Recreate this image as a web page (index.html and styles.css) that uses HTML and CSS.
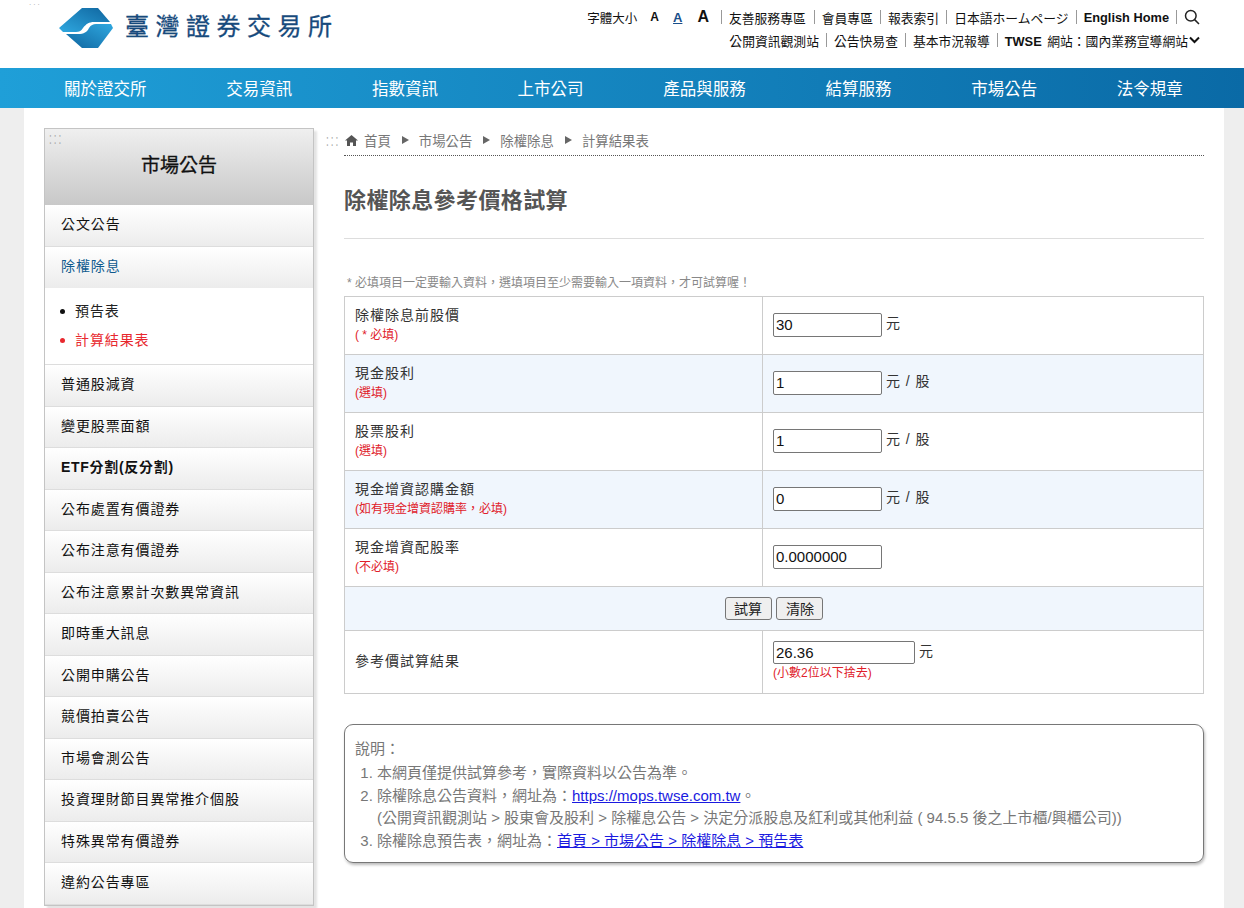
FILE: index.html
```html
<!DOCTYPE html>
<html lang="zh-Hant">
<head>
    <meta charset="UTF-8">
    <title>除權除息參考價格試算</title>
    <link rel="stylesheet" href="styles.css">
</head>
<body>
    <a class="acc acc-top" href="#">...</a>
    <header class="top">
        <a class="logo" href="#">
            <svg width="56" height="42" viewBox="0 0 56 42">
                <defs>
                    <linearGradient id="lg1" x1="0" y1="1" x2="1" y2="0">
                        <stop offset="0" stop-color="#2fa8e0"/>
                        <stop offset="1" stop-color="#0f659f"/>
                    </linearGradient>
                    <linearGradient id="lg2" x1="0" y1="1" x2="1" y2="0">
                        <stop offset="0" stop-color="#0f659f"/>
                        <stop offset="1" stop-color="#2fa8e0"/>
                    </linearGradient>
                </defs>
                <path d="M1 21L24 1H40L52 15H36C31 15 28 17 25 21C23 24 21 25 18 25H5Z" fill="url(#lg1)"/>
                <path d="M55 21L40 41H24L8 27H20C26 27 29 25 31 21C33 18 35 17 38 17H53Z" fill="url(#lg2)"/>
            </svg>
            <span class="logo-name">臺灣證券交易所</span>
        </a>
        <div class="tools">
            <div class="tool-row">
                <span class="font-label">字體大小</span>
                <a class="fs fs-s" href="#">A</a>
                <a class="fs fs-m" href="#">A</a>
                <a class="fs fs-l" href="#">A</a>
                <a class="tl first" href="#">友善服務專區</a>
                <a class="tl" href="#">會員專區</a>
                <a class="tl" href="#">報表索引</a>
                <a class="tl" href="#">日本語ホームページ</a>
                <a class="tl strong" href="#">English Home</a>
                <a class="tl search" href="#">
                    <svg width="16" height="16" viewBox="0 0 16 16" fill="none" stroke="#222" stroke-width="1.5">
                        <circle cx="6.8" cy="6.8" r="5.3"/>
                        <path d="M10.6 10.6L15 15"/>
                    </svg>
                </a>
            </div>
            <div class="tool-row">
                <a class="tl" href="#">公開資訊觀測站</a>
                <a class="tl" href="#">公告快易查</a>
                <a class="tl" href="#">基本市況報導</a>
                <span class="tl">
                    <span><b>TWSE</b> 網站：國內業務宣導網站</span>
                    <svg class="caret" width="11" height="8" viewBox="0 0 11 8" fill="none" stroke="#111" stroke-width="2"><path d="M1 1.5L5.5 6L10 1.5"/></svg>
                </span>
            </div>
        </div>
    </header>

    <nav class="nav">
        <a href="#">關於證交所</a>
        <a href="#">交易資訊</a>
        <a href="#">指數資訊</a>
        <a href="#">上市公司</a>
        <a href="#">產品與服務</a>
        <a href="#">結算服務</a>
        <a href="#">市場公告</a>
        <a href="#">法令規章</a>
    </nav>

    <div class="wrap">
        <aside class="side">
            <a class="acc acc-side" href="#">:::</a>
            <h2>市場公告</h2>
            <a class="side-item" href="#">公文公告</a>
            <a class="side-item on" href="#">除權除息</a>
            <ul class="sub">
                <li><a href="#">預告表</a></li>
                <li class="cur"><a href="#">計算結果表</a></li>
            </ul>
            <a class="side-item" href="#">普通股減資</a>
            <a class="side-item" href="#">變更股票面額</a>
            <a class="side-item strong" href="#">ETF分割(反分割)</a>
            <a class="side-item" href="#">公布處置有價證券</a>
            <a class="side-item" href="#">公布注意有價證券</a>
            <a class="side-item" href="#">公布注意累計次數異常資訊</a>
            <a class="side-item" href="#">即時重大訊息</a>
            <a class="side-item" href="#">公開申購公告</a>
            <a class="side-item" href="#">競價拍賣公告</a>
            <a class="side-item" href="#">市場會測公告</a>
            <a class="side-item" href="#">投資理財節目異常推介個股</a>
            <a class="side-item" href="#">特殊異常有價證券</a>
            <a class="side-item" href="#">違約公告專區</a>
        </aside>

        <main class="main">
            <a class="acc acc-main" href="#">:::</a>
            <div class="crumb">
                <svg width="13" height="11" viewBox="0 0 13 11" fill="#555"><path d="M6.5 0L13 5.6H11V11H8V7.4H5V11H2V5.6H0Z"/></svg>
                <a href="#">首頁</a>
                <i></i>
                <a href="#">市場公告</a>
                <i></i>
                <a href="#">除權除息</a>
                <i></i>
                <a href="#">計算結果表</a>
            </div>
            <h1>除權除息參考價格試算</h1>
            <p class="note">* 必填項目一定要輸入資料，選填項目至少需要輸入一項資料，才可試算喔！</p>

            <table class="calc">
                <tr>
                    <th>除權除息前股價<small>( * 必填)</small></th>
                    <td><input class="num" value="30"> 元</td>
                </tr>
                <tr class="alt">
                    <th>現金股利<small>(選填)</small></th>
                    <td><input class="num" value="1"> 元 / 股</td>
                </tr>
                <tr>
                    <th>股票股利<small>(選填)</small></th>
                    <td><input class="num" value="1"> 元 / 股</td>
                </tr>
                <tr class="alt">
                    <th>現金增資認購金額<small>(如有現金增資認購率，必填)</small></th>
                    <td><input class="num" value="0"> 元 / 股</td>
                </tr>
                <tr>
                    <th>現金增資配股率<small>(不必填)</small></th>
                    <td><input class="num" value="0.0000000"></td>
                </tr>
                <tr class="alt btn-row">
                    <td colspan="2"><button>試算</button> <button>清除</button></td>
                </tr>
                <tr class="res-row">
                    <th>參考價試算結果</th>
                    <td><input class="num res" value="26.36"> 元<small>(小數2位以下捨去)</small></td>
                </tr>
            </table>

            <div class="info">
                <p>說明：</p>
                <ol>
                    <li>本網頁僅提供試算參考，實際資料以公告為準。</li>
                    <li>除權除息公告資料，網址為：<a href="#">https://mops.twse.com.tw</a>。<br>(公開資訊觀測站 &gt; 股東會及股利 &gt; 除權息公告 &gt; 決定分派股息及紅利或其他利益 ( 94.5.5 後之上市櫃/興櫃公司))</li>
                    <li>除權除息預告表，網址為：<a href="#">首頁 &gt; 市場公告 &gt; 除權除息 &gt; 預告表</a></li>
                </ol>
            </div>
        </main>
    </div>
</body>
</html>
```

FILE: styles.css
```css
* {
    margin: 0;
    padding: 0;
    box-sizing: border-box;
}
html, body {
    height: 908px;
    overflow: hidden;
}
body {
    position: relative;
    background-color: #eee;
    font-family: "Liberation Sans", "Noto Sans CJK TC", sans-serif;
    font-size: 14px;
    color: #222;
}
a {
    color: inherit;
    text-decoration: none;
}
li {
    list-style: none;
}
/* 無障礙定位點 */
.acc {
    position: absolute;
    font-size: 10px;
    line-height: 10px;
    letter-spacing: 2px;
    color: #aaa;
}
.acc-top {
    left: 29px;
    top: 0;
    font-size: 8px;
    line-height: 6px;
    letter-spacing: 2px;
}
.acc-side {
    left: 4px;
    top: 5px;
    transform: scaleY(1.6);
}
.acc-main {
    left: -18px;
    top: 8px;
    transform: scaleY(1.6);
}
/* 頁首 */
.top {
    height: 68px;
    background-color: #fff;
    display: flex;
    justify-content: space-between;
    padding: 0 44px 0 58px;
}
.logo {
    display: flex;
    align-items: flex-start;
    gap: 11px;
    padding-top: 7px;
}
.logo-name {
    font-size: 24px;
    line-height: 40px;
    letter-spacing: 6.5px;
    color: #174a7c;
    -webkit-text-stroke: 0.3px #174a7c;
}
.tools {
    display: flex;
    flex-direction: column;
    align-items: flex-end;
    padding-top: 8px;
    gap: 5px;
}
.tool-row {
    display: flex;
    align-items: center;
    height: 18px;
    font-size: 12.8px;
    color: #111;
}
.tool-row b {
    margin-right: 2px;
}
.font-label {
    font-size: 12.5px;
    margin-right: 13px;
}
.fs {
    font-weight: bold;
    margin-right: 14px;
}
.fs-s {
    font-size: 12px;
}
.fs-m {
    font-size: 13px;
    margin-right: 15px;
    color: #1b4f8a;
    text-decoration: underline;
}
.fs-l {
    font-size: 16px;
    margin-right: 13px;
}
.tl {
    display: flex;
    align-items: center;
    gap: 1px;
    height: 14px;
    padding: 0 7px;
    border-right: 1px solid #999;
    white-space: nowrap;
}
.tl.first {
    border-left: 1px solid #999;
    padding-right: 8px;
    margin-left: -1px;
}
.tool-row .tl:last-child {
    border-right: 0;
    padding-right: 0;
}
.strong {
    font-weight: bold;
}
/* 主選單 */
.nav {
    height: 40px;
    display: flex;
    gap: 79.7px;
    padding-left: 64px;
    align-items: center;
    background: linear-gradient(90deg, #1f9fd8, #0a6aa6);
    color: #fff;
    font-size: 16.5px;
    white-space: nowrap;
}
/* 內容區 */
.wrap {
    width: 1200px;
    height: 800px;
    margin-left: 24px;
    background-color: #fff;
    display: flex;
    align-items: flex-start;
    padding: 20px 20px 0;
    gap: 30px;
}
/* 側欄 */
.side {
    position: relative;
    flex: none;
    width: 270px;
    border: 1px solid #c4c4c4;
    box-shadow: 3px 3px 2px #e4e4e4;
    background-color: #fff;
}
.side h2 {
    height: 76px;
    padding-top: 25px;
    text-align: center;
    font-size: 19px;
    line-height: 24px;
    font-weight: normal;
    color: #111;
    -webkit-text-stroke: 0.3px #111;
    background: linear-gradient(#efefef, #c8c8c8);
}
.side-item {
    display: block;
    height: 41.5px;
    line-height: 39px;
    padding-left: 16px;
    font-size: 14px;
    letter-spacing: 0.9px;
    color: #111;
    border-bottom: 1px solid #ddd;
    background: linear-gradient(#fff, #ececec);
}
.side-item.strong {
    letter-spacing: 0.7px;
}
.side-item.on {
    color: #0e5a8e;
    border-bottom: 0;
}
.sub {
    height: 77px;
    padding-top: 9px;
    border-bottom: 1px solid #ddd;
}
.sub li {
    position: relative;
    height: 29px;
    line-height: 29px;
    padding-left: 30px;
    letter-spacing: 0.9px;
    color: #222;
}
.sub li::before {
    content: "";
    position: absolute;
    left: 15px;
    top: 12px;
    width: 5px;
    height: 5px;
    border-radius: 50%;
    background-color: #111;
}
.sub .cur {
    color: #e8282e;
}
.sub .cur::before {
    background-color: #e8282e;
}
/* 主內容 */
.main {
    position: relative;
    flex: 1;
    min-width: 0;
}
.crumb {
    height: 28px;
    display: flex;
    align-items: center;
    padding-bottom: 3px;
    border-bottom: 1px dotted #555;
    font-size: 13.4px;
    color: #777;
    white-space: nowrap;
}
.crumb svg {
    margin: 0 6px 0 1px;
}
.crumb i {
    width: 0;
    height: 0;
    margin: 0 10px 0 11px;
    border-left: 7px solid #666;
    border-top: 4px solid transparent;
    border-bottom: 4px solid transparent;
}
h1 {
    height: 83px;
    padding-top: 30px;
    border-bottom: 1px solid #ddd;
    font-size: 22px;
    line-height: 30px;
    letter-spacing: 0.4px;
    color: #555;
}
.note {
    height: 57px;
    padding-top: 35px;
    padding-left: 3px;
    font-size: 12px;
    line-height: 18px;
    color: #888;
}
.calc {
    width: 860px;
    border-collapse: collapse;
    table-layout: fixed;
    font-size: 14px;
    color: #333;
}
.calc th,
.calc td {
    border: 1px solid #ccc;
    height: 58px;
    padding: 0 10px;
    text-align: left;
    font-weight: normal;
    vertical-align: middle;
    letter-spacing: 1px;
}
.calc th {
    width: 418px;
    padding-bottom: 5px;
}
.calc td {
    padding-bottom: 2px;
}
.calc small {
    display: block;
    font-size: 12px;
    line-height: 14px;
    letter-spacing: 0;
    color: #e0202a;
    margin-top: 4px;
}
.alt td,
.alt th {
    background-color: #f0f6fd;
}
.num {
    width: 109px;
    height: 24px;
    margin-right: -1px;
    padding: 0 2px;
    border: 1px solid #767676;
    border-radius: 2px;
    font-family: inherit;
    font-size: 15px;
    color: #111;
    vertical-align: middle;
}
.calc .btn-row td {
    height: 44px;
    text-align: center;
    padding: 0 0 1px;
}
button {
    width: 47px;
    height: 23px;
    border: 1px solid #767676;
    border-radius: 3px;
    background-color: #efefef;
    font-family: inherit;
    font-size: 14px;
    color: #222;
    vertical-align: middle;
}
.calc .res-row th,
.calc .res-row td {
    height: 63px;
}
.calc .res-row td {
    padding-bottom: 4px;
}
.num.res {
    width: 142px;
    height: 23px;
}
.calc .res-row small {
    margin-top: 2px;
}
/* 說明 */
.info {
    margin-top: 30px;
    height: 139px;
    padding: 13px 10px 0;
    border: 1px solid #777;
    border-radius: 9px;
    box-shadow: 1px 2px 3px #bbb;
    font-size: 15px;
    line-height: 22px;
    color: #777;
}
.info p {
    margin-bottom: 2px;
}
.info ol {
    padding-left: 22px;
}
.info li {
    list-style: decimal;
    margin-bottom: 1px;
}
.info a {
    color: #1a1ae0;
    text-decoration: underline;
}
```
